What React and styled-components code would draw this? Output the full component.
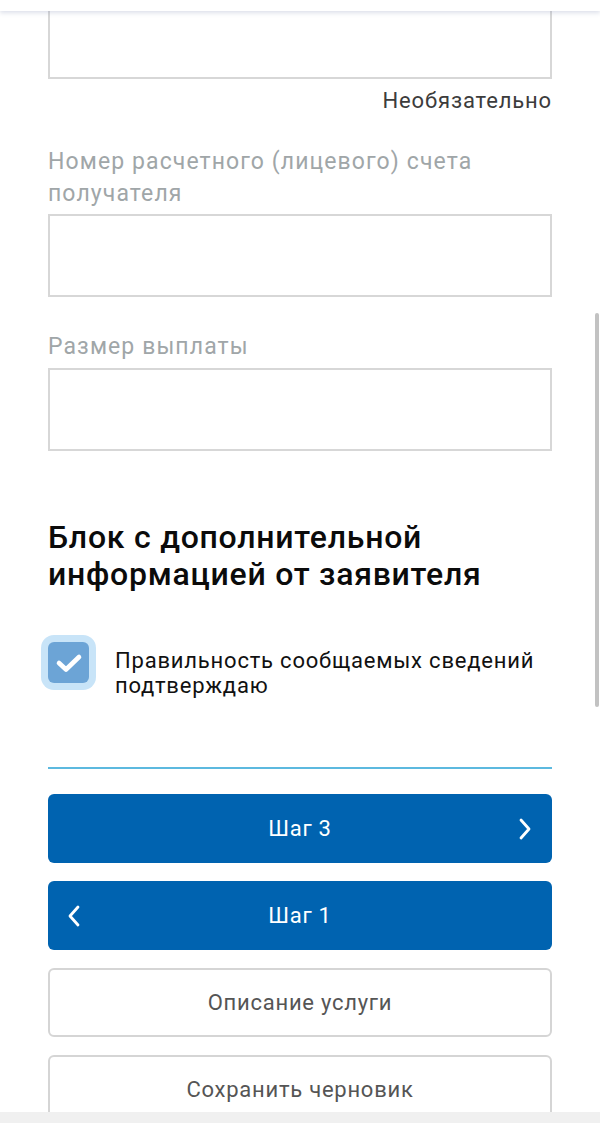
import React from "react";
import styled, { createGlobalStyle } from "styled-components";

const Global = createGlobalStyle`
  html, body { margin: 0; padding: 0; background: #fff; }
  body { font-family: Roboto, "Noto Sans", "Liberation Sans", sans-serif; }
  * { box-sizing: border-box; }
`;

const Screen = styled.div`
  position: relative;
  width: 600px;
  height: 1123px;
  overflow: hidden;
  display: flex;
  flex-direction: column;
  background: #fff;
`;

const TopBar = styled.div`
  position: relative;
  z-index: 2;
  flex: 0 0 11px;
  background: #fff;
  box-shadow: 0 2px 4px rgba(120, 130, 170, 0.25);
`;

const Content = styled.div`
  flex: 1;
  min-height: 0;
  overflow: hidden;
  margin-top: -15px;
  padding: 0 48px;
  display: flex;
  flex-direction: column;
  & > * { flex-shrink: 0; }
`;

const BottomBar = styled.div`
  position: relative;
  z-index: 2;
  flex: 0 0 11px;
  background: #f0f0f0;
`;

const Scrollbar = styled.div`
  position: absolute;
  right: 1px;
  top: 313px;
  width: 4px;
  height: 394px;
  background: #c2c2c2;
  border-radius: 2px;
`;

const Field = styled.div`
  display: flex;
  flex-direction: column;
  margin-top: ${(p) => p.$mt || 0}px;
`;

const Label = styled.div`
  font-size: 23px;
  line-height: 32px;
  letter-spacing: 1.1px;
  color: #a0a6a8;
  margin-bottom: ${(p) => p.$mb || 4}px;
`;

const Input = styled.div`
  flex-shrink: 0;
  height: 83px;
  border: 2px solid #d7d7d7;
  background: #fff;
`;

const Hint = styled.div`
  margin-top: 9px;
  font-size: 22px;
  line-height: 26px;
  letter-spacing: 0.85px;
  color: #3c3c3c;
  text-align: right;
`;

const Heading = styled.h2`
  margin: 68px 0 0;
  font-size: 32px;
  line-height: 37px;
  font-weight: 500;
  color: #0b0b0b;
  letter-spacing: 0.75px;
`;

const CheckRow = styled.label`
  display: flex;
  align-items: flex-start;
  gap: 26px;
  margin-top: 49px;
`;

const CheckBox = styled.span`
  flex: 0 0 41px;
  width: 41px;
  height: 41px;
  border-radius: 6px;
  background: #6ca4d6;
  box-shadow: 0 0 0 7px #c8e4f8;
  display: flex;
  align-items: center;
  justify-content: center;
`;

const CheckText = styled.span`
  margin-top: 6px;
  font-size: 22px;
  line-height: 25px;
  letter-spacing: 0.8px;
  color: #111;
`;

const Divider = styled.div`
  margin-top: 69px;
  height: 2px;
  background: #5cb9df;
`;

const Buttons = styled.div`
  margin-top: 25px;
  display: flex;
  flex-direction: column;
  gap: 18px;
`;

const Button = styled.button`
  position: relative;
  height: 69px;
  width: 100%;
  border-radius: 6px;
  font-family: inherit;
  font-size: 22px;
  letter-spacing: 0.75px;
  display: flex;
  align-items: center;
  justify-content: center;
  cursor: pointer;
  background: ${(p) => (p.$primary ? "#0063b0" : "#fff")};
  color: ${(p) => (p.$primary ? "#fff" : "#555")};
  border: ${(p) => (p.$primary ? "none" : "2px solid #d5d5d5")};
  flex-shrink: 0;
`;

const Chevron = styled.svg`
  position: absolute;
  top: 50%;
  transform: translateY(-50%);
  ${(p) => (p.$side === "right" ? "right: 20px;" : "left: 19px;")}
`;

const ChevronIcon = ({ side }) => (
  <Chevron $side={side} width="14" height="24" viewBox="0 0 14 24">
    <polyline
      points={side === "right" ? "3,3 11,12 3,21" : "11,3 3,12 11,21"}
      fill="none"
      stroke="#fff"
      strokeWidth="2.8"
      strokeLinecap="round"
      strokeLinejoin="round"
    />
  </Chevron>
);

export default function App() {
  return (
    <>
      <Global />
      <Screen>
        <TopBar />
        <Content>
          <Field>
            <Input />
            <Hint>Необязательно</Hint>
          </Field>
          <Field $mt={32}>
            <Label>
              Номер расчетного (лицевого) счета
              <br />
              получателя
            </Label>
            <Input />
          </Field>
          <Field $mt={34}>
            <Label $mb={5}>Размер выплаты</Label>
            <Input />
          </Field>
          <Heading>
            Блок с дополнительной
            <br />
            информацией от заявителя
          </Heading>
          <CheckRow>
            <CheckBox>
              <svg width="28" height="20" viewBox="0 0 28 20">
                <polyline
                  points="4,10 11,16.5 24,4"
                  fill="none"
                  stroke="#fff"
                  strokeWidth="4.6"
                  strokeLinecap="round"
                  strokeLinejoin="round"
                />
              </svg>
            </CheckBox>
            <CheckText>
              Правильность сообщаемых сведений
              <br />
              подтверждаю
            </CheckText>
          </CheckRow>
          <Divider />
          <Buttons>
            <Button $primary>
              Шаг 3
              <ChevronIcon side="right" />
            </Button>
            <Button $primary>
              <ChevronIcon side="left" />
              Шаг 1
            </Button>
            <Button>Описание услуги</Button>
            <Button>Сохранить черновик</Button>
          </Buttons>
        </Content>
        <BottomBar />
        <Scrollbar />
      </Screen>
    </>
  );
}
